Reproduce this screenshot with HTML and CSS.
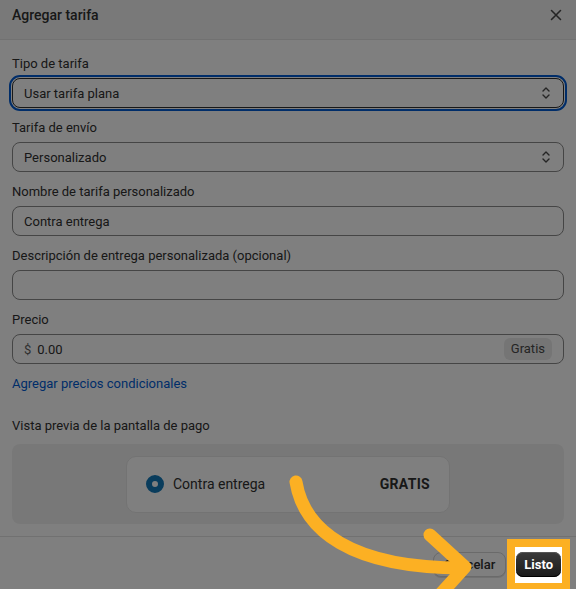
FILE: index.html
```html
<!DOCTYPE html>
<html lang="es">
<head>
  <meta charset="UTF-8">
  <meta name="viewport" content="width=device-width, initial-scale=1.0">
  <title>Agregar tarifa</title>
  <link rel="stylesheet" href="styles.css">
</head>
<body>
  <div class="modal">
    <header class="modal-header">
      <h2 class="modal-title">Agregar tarifa</h2>
      <button class="close-btn" aria-label="Cerrar">
        <svg viewBox="0 0 20 20" width="20" height="20"><path d="M5.5 5.5l9 9M14.5 5.5l-9 9"/></svg>
      </button>
    </header>

    <div class="modal-body">
      <div class="field">
        <label class="label">Tipo de tarifa</label>
        <div class="control select is-focused">
          <span>Usar tarifa plana</span>
          <svg class="chevron" viewBox="0 0 20 20" width="20" height="20"><path d="M7 8l3-3 3 3M7 12l3 3 3-3"/></svg>
        </div>
      </div>

      <div class="field">
        <label class="label">Tarifa de envío</label>
        <div class="control select">
          <span>Personalizado</span>
          <svg class="chevron" viewBox="0 0 20 20" width="20" height="20"><path d="M7 8l3-3 3 3M7 12l3 3 3-3"/></svg>
        </div>
      </div>

      <div class="field">
        <label class="label">Nombre de tarifa personalizado</label>
        <div class="control"><span>Contra entrega</span></div>
      </div>

      <div class="field">
        <label class="label">Descripción de entrega personalizada (opcional)</label>
        <div class="control"></div>
      </div>

      <div class="field">
        <label class="label">Precio</label>
        <div class="control">
          <span class="prefix">$</span>
          <span class="value">0.00</span>
          <span class="suffix">Gratis</span>
        </div>
      </div>

      <a class="link" href="#">Agregar precios condicionales</a>

      <p class="preview-label">Vista previa de la pantalla de pago</p>
      <div class="preview">
        <div class="preview-card">
          <span class="radio"></span>
          <span class="rate-name">Contra entrega</span>
          <span class="rate-price">GRATIS</span>
        </div>
      </div>
    </div>

    <footer class="modal-footer">
      <button class="btn">Cancelar</button>
      <span class="spotlight"><button class="btn btn-primary">Listo</button></span>
    </footer>
  </div>

  <div class="dim"></div>

  <svg class="arrow" viewBox="0 0 576 589" width="576" height="589">
    <path d="M296 482 C304 530 350 568 463 568"/>
    <path d="M430 535 L465 567 L437 598"/>
  </svg>
</body>
</html>
```

FILE: styles.css
```css
body {
  margin: 0;
  font-family: Roboto, "Noto Sans", sans-serif;
  font-size: 13px;
  color: #303030;
  background: #fff;
  height: 589px;
  overflow: hidden;
}
.modal {
  width: 576px;
  display: flex;
  flex-direction: column;
}
.modal-header {
  flex-shrink: 0;
  height: 40px;
  box-sizing: border-box;
  padding: 5px 12px 0;
  display: flex;
  align-items: flex-start;
  justify-content: space-between;
  background: #f3f3f3;
  border-bottom: 1px solid #e3e3e3;
}
.modal-title {
  margin: 0;
  font-size: 14px;
  font-weight: 500;
  line-height: 20px;
}
.close-btn {
  border: none;
  background: none;
  padding: 0;
  margin-right: -2px;
  width: 20px;
  height: 20px;
}
.close-btn svg {
  display: block;
  fill: none;
  stroke: #4a4a4a;
  stroke-width: 1.6;
  stroke-linecap: round;
}
.modal-body {
  padding: 14px 12px 12px;
  display: flex;
  flex-direction: column;
}
.field {
  margin-bottom: 10px;
}
.label {
  display: block;
  line-height: 20px;
  margin-bottom: 4px;
}
.control {
  height: 30px;
  box-sizing: border-box;
  border: 1px solid #8a8a8a;
  border-radius: 8px;
  padding: 0 11px;
  display: flex;
  align-items: center;
  background: #fff;
}
.select {
  justify-content: space-between;
  padding-right: 7px;
}
.is-focused {
  border-color: #303030;
  outline: 2px solid #005bd3;
  outline-offset: 1px;
}
.chevron {
  fill: none;
  stroke: #4a4a4a;
  stroke-width: 1.4;
  stroke-linecap: round;
  stroke-linejoin: round;
}
.prefix {
  color: #616161;
  margin-right: 6px;
}
.value {
  flex: 1;
}
.suffix {
  background: #ebebeb;
  border-radius: 6px;
  padding: 2px 7px;
  line-height: 18px;
  color: #4a4a4a;
}
.link {
  color: #005bd3;
  text-decoration: none;
  line-height: 20px;
  align-self: flex-start;
}
.preview-label {
  margin: 22px 0 8px;
  line-height: 20px;
}
.preview {
  background: #f1f1f1;
  border-radius: 8px;
  height: 80px;
  display: flex;
  align-items: center;
  justify-content: center;
}
.preview-card {
  width: 324px;
  height: 57px;
  box-sizing: border-box;
  background: #fff;
  border: 1px solid #e6e6e6;
  border-radius: 10px;
  padding: 0 19px;
  display: flex;
  align-items: center;
  font-size: 14px;
}
.radio {
  width: 18px;
  height: 18px;
  box-sizing: border-box;
  border-radius: 50%;
  border: 6px solid #1278b8;
  margin-right: 9px;
}
.rate-name {
  flex: 1;
}
.rate-price {
  font-weight: 700;
  letter-spacing: 0.3px;
}
.modal-footer {
  flex-shrink: 0;
  border-top: 1px solid #e3e3e3;
  padding: 15px 15px 16px;
  display: flex;
  justify-content: flex-end;
  align-items: center;
  gap: 11px;
}
.btn {
  font-family: inherit;
  font-size: 13px;
  font-weight: 500;
  height: 25px;
  padding: 0 10px;
  border-radius: 8px;
  border: 1px solid #d4d4d4;
  background: #fff;
  color: #303030;
  box-shadow: 0 1px 0 #e3e3e3;
}
.btn-primary {
  display: block;
  font-weight: 700;
  color: #fff;
  border: none;
  padding: 0 8px;
  background: linear-gradient(#3a3a3a, #1a1a1a);
  box-shadow: inset 0 -1px 0 #000, inset 0 1px 0 #555;
  border-radius: 7px;
}
.spotlight {
  position: relative;
  z-index: 3;
  background: #fff;
  border: 8px solid #fcb023;
  padding: 5px 1px 6px 1px;
  margin: -13px -9px -14px -10px;
}
.dim {
  position: fixed;
  inset: 0;
  z-index: 2;
  background: rgba(0, 0, 0, 0.5);
}
.arrow {
  position: fixed;
  top: 0;
  left: 0;
  z-index: 4;
  pointer-events: none;
  fill: none;
  stroke: #fcb023;
  stroke-width: 13;
  stroke-linecap: round;
  stroke-linejoin: round;
}
```
